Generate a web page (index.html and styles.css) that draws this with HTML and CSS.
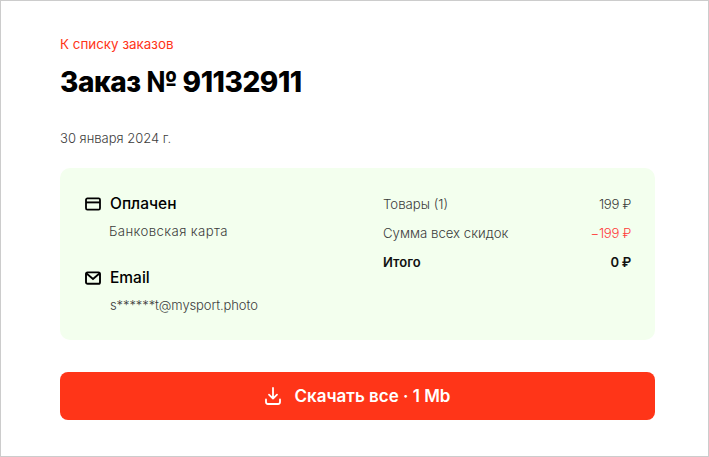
FILE: index.html
```html
<!DOCTYPE html>
<html lang="ru">
<head>
<meta charset="utf-8">
<title>Заказ № 91132911</title>
<link rel="stylesheet" href="styles.css">
</head>
<body>
<main class="frame">
  <a class="back" href="#">К списку заказов</a>
  <h1 class="title">Заказ № 91132911</h1>
  <p class="date">30 января 2024 г.</p>
  <section class="card">
    <div class="info">
      <div class="block">
        <div class="head">
          <svg class="icon" viewBox="0 0 16 16" fill="none" stroke="#000" stroke-width="1.8"><rect x="1" y="2.4" width="14" height="11.2" rx="1.4"/><path d="M1 6.4h14" stroke-width="1.9"/></svg>
          <span>Оплачен</span>
        </div>
        <div class="sub">Банковская карта</div>
      </div>
      <div class="block">
        <div class="head">
          <svg class="icon" viewBox="0 0 16 16" fill="none" stroke="#000" stroke-width="1.9"><rect x="1" y="2.4" width="14" height="11.4" rx="1.6"/><path d="M1.6 3.6 8 8.9l6.4-5.3"/></svg>
          <span>Email</span>
        </div>
        <div class="sub mail">s******t@mysport.photo</div>
      </div>
    </div>
    <div class="totals">
      <div class="row"><span>Товары (1)</span><span class="num">199 ₽</span></div>
      <div class="row"><span>Сумма всех скидок</span><span class="num red">−199 ₽</span></div>
      <div class="row total"><span>Итого</span><span class="num">0 ₽</span></div>
    </div>
  </section>
  <button class="download" type="button">
    <svg class="dl-icon" viewBox="0 0 16 18" fill="none" stroke="#fff" stroke-width="1.8" stroke-linecap="round" stroke-linejoin="round"><path d="M8 1v10.5M4 7.6l4 4 4-4"/><path d="M1 12.5v2.6A1.9 1.9 0 0 0 2.9 17h10.2a1.9 1.9 0 0 0 1.9-1.9v-2.6"/></svg>
    <span>Скачать все · 1 Mb</span>
  </button>
</main>
</body>
</html>
```

FILE: styles.css
```css
* { box-sizing: border-box; }
html, body { margin: 0; padding: 0; background: #fff; }
body { font-family: "Inter", "Noto Sans", sans-serif; color: #000; }
.frame {
  width: 709px; height: 457px;
  border: 1px solid #ccc;
  padding: 36px 53px 0 59px;
  display: flex; flex-direction: column; overflow: hidden;
}
.back { font-size: 13.4px; line-height: 15px; color: #ff3518; text-decoration: none; }
.title { margin: 13px 0 0; font-size: 28px; line-height: 34px; font-weight: 800; letter-spacing: -0.45px; }
.date { margin: 31px 0 0; font-size: 13px; line-height: 16px; font-weight: 300; color: #3c3c3c; letter-spacing: 0; }
.card {
  margin-top: 22px; height: 172px;
  background: #f3ffee; border-radius: 10px;
  padding: 27px 24px 0 25px;
  display: flex; justify-content: space-between;
}
.info { width: 298px; display: flex; flex-direction: column; gap: 30px; }
.block { display: flex; flex-direction: column; }
.head { display: flex; align-items: center; gap: 9px; font-size: 15.5px; line-height: 18px; font-weight: 500; }
.icon { width: 16px; height: 16px; flex: none; }
.sub { margin: 10px 0 0 24px; font-size: 13.2px; line-height: 16px; font-weight: 300; color: #3c3c3c; letter-spacing: 0.4px; }
.mail { margin: 10px 0 0 25px; font-size: 13px; letter-spacing: -0.1px; }
.totals { flex: 1; display: flex; flex-direction: column; gap: 13px; padding-top: 1px; }
.row { display: flex; justify-content: space-between; font-size: 13.2px; line-height: 16px; font-weight: 300; color: #3c3c3c; }
.num { letter-spacing: -0.3px; }
.red { color: #ff3b3b; }
.total { color: #111; font-weight: 600; font-size: 13px; }
.download {
  margin-top: 32px; height: 48px; width: 595px;
  background: #ff3518; color: #fff; border: 0; border-radius: 8px;
  font-family: inherit; font-size: 17px; font-weight: 600;
  display: flex; align-items: center; justify-content: center; gap: 14px;
}
.dl-icon { width: 16px; height: 18px; flex: none; }
```
